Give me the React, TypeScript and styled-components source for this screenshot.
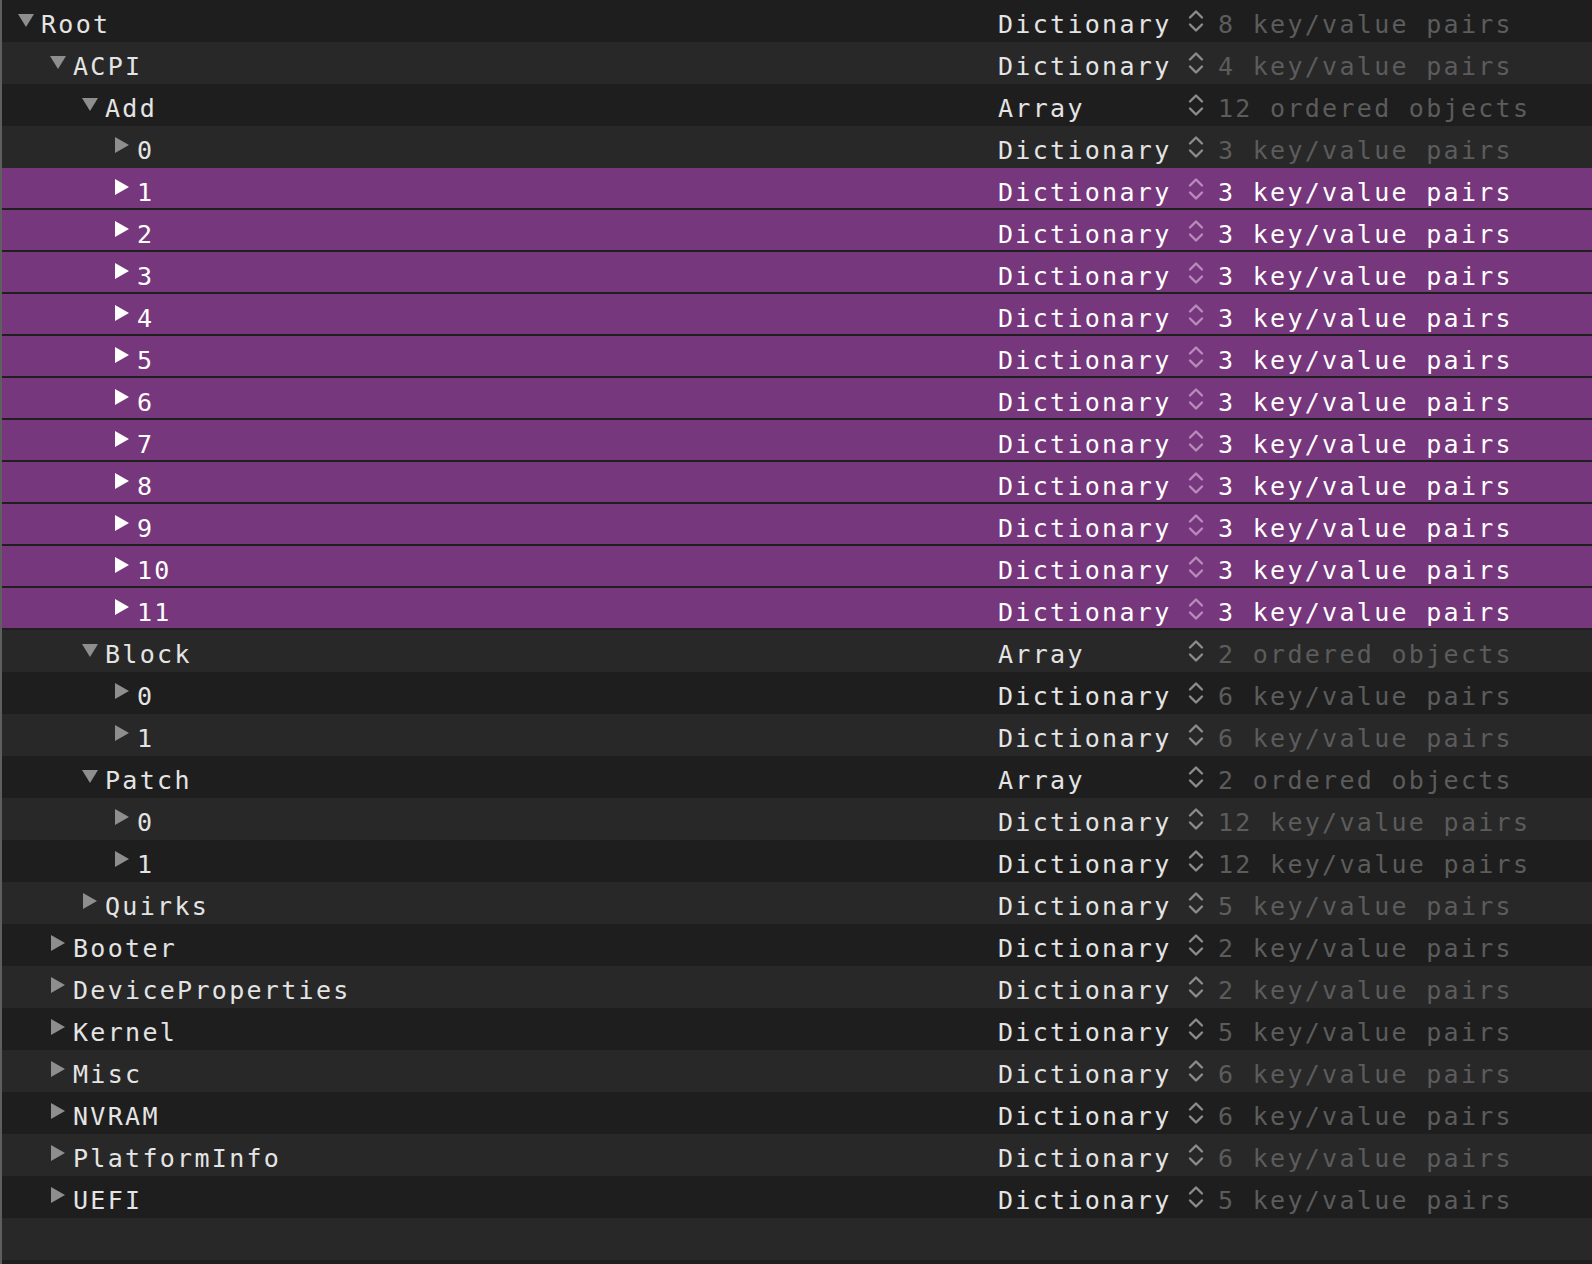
import React from 'react';
import styled, { createGlobalStyle } from 'styled-components';

interface Node {
  key: string;
  level: number;
  open: boolean;
  type: string;
  value: string;
  selected?: boolean;
}

const GlobalStyle = createGlobalStyle`
  html, body {
    margin: 0;
    padding: 0;
    background: #1e1e1e;
    overflow: hidden;
  }
  body {
    font-family: "DejaVu Sans Mono", "Liberation Mono", monospace;
  }
`;

const Outline = styled.div`
  width: 1592px;
  height: 1264px;
  box-sizing: border-box;
  border-left: 2px solid #5e5e5e;
  overflow: hidden;
  display: flex;
  flex-direction: column;
`;

const Row = styled.div<{ $alt: boolean; $selected?: boolean }>`
  flex: 0 0 42px;
  height: 42px;
  box-sizing: border-box;
  display: flex;
  align-items: flex-start;
  background: ${p => (p.$selected ? '#77377c' : p.$alt ? '#282828' : '#1e1e1e')};
  border-bottom: ${p => (p.$selected ? '2px solid #1f1f1f' : 'none')};
  color: ${p => (p.$selected ? '#ffffff' : '#e4e4e4')};
  font-size: 25px;
  letter-spacing: 2.3px;
  white-space: nowrap;
`;

const KeyCell = styled.div<{ $level: number }>`
  flex: 0 0 996px;
  display: flex;
  align-items: flex-start;
  padding-left: ${p => 16 + p.$level * 32}px;
  box-sizing: border-box;
`;

const Disclosure = styled.div`
  flex: 0 0 23px;
  height: 42px;
  display: flex;
  justify-content: flex-start;
`;

const TriangleDown = styled.span<{ $selected?: boolean }>`
  margin-top: 14px;
  width: 0;
  height: 0;
  border-left: 8px solid transparent;
  border-right: 8px solid transparent;
  border-top: 13px solid ${p => (p.$selected ? '#ffffff' : '#8e8e8e')};
`;

const TriangleRight = styled.span<{ $selected?: boolean }>`
  margin-top: 11px;
  margin-left: 1px;
  width: 0;
  height: 0;
  border-top: 8.5px solid transparent;
  border-bottom: 8.5px solid transparent;
  border-left: 14px solid ${p => (p.$selected ? '#ffffff' : '#8e8e8e')};
`;

const Text = styled.span`
  padding-top: 8px;
  line-height: 34px;
`;

const TypeCell = styled(Text)`
  flex: 0 0 190px;
`;

const StepperCell = styled.div<{ $selected?: boolean }>`
  flex: 0 0 30px;
  height: 42px;
  display: flex;
  align-items: flex-start;
  color: ${p => (p.$selected ? '#b98bbc' : '#8c8c8c')};

  svg {
    margin-top: 9px;
  }
`;

const ValueCell = styled(Text)<{ $selected?: boolean }>`
  color: ${p => (p.$selected ? '#ffffff' : '#5c5c5c')};
`;

const Stepper = () => (
  <svg width="16" height="24" viewBox="0 0 16 24" fill="none" stroke="currentColor" strokeWidth="2.4" strokeLinecap="round" strokeLinejoin="round">
    <path d="M2 8.5 L8 2.5 L14 8.5" />
    <path d="M2 15.5 L8 21.5 L14 15.5" />
  </svg>
);

const dict = (n: number) => `${n} key/value pairs`;
const arr = (n: number) => `${n} ordered objects`;

const nodes: Node[] = [
  { key: 'Root', level: 0, open: true, type: 'Dictionary', value: dict(8) },
  { key: 'ACPI', level: 1, open: true, type: 'Dictionary', value: dict(4) },
  { key: 'Add', level: 2, open: true, type: 'Array', value: arr(12) },
  { key: '0', level: 3, open: false, type: 'Dictionary', value: dict(3) },
  ...Array.from({ length: 11 }, (_, i) => ({
    key: String(i + 1),
    level: 3,
    open: false,
    type: 'Dictionary',
    value: dict(3),
    selected: true,
  })),
  { key: 'Block', level: 2, open: true, type: 'Array', value: arr(2) },
  { key: '0', level: 3, open: false, type: 'Dictionary', value: dict(6) },
  { key: '1', level: 3, open: false, type: 'Dictionary', value: dict(6) },
  { key: 'Patch', level: 2, open: true, type: 'Array', value: arr(2) },
  { key: '0', level: 3, open: false, type: 'Dictionary', value: dict(12) },
  { key: '1', level: 3, open: false, type: 'Dictionary', value: dict(12) },
  { key: 'Quirks', level: 2, open: false, type: 'Dictionary', value: dict(5) },
  { key: 'Booter', level: 1, open: false, type: 'Dictionary', value: dict(2) },
  { key: 'DeviceProperties', level: 1, open: false, type: 'Dictionary', value: dict(2) },
  { key: 'Kernel', level: 1, open: false, type: 'Dictionary', value: dict(5) },
  { key: 'Misc', level: 1, open: false, type: 'Dictionary', value: dict(6) },
  { key: 'NVRAM', level: 1, open: false, type: 'Dictionary', value: dict(6) },
  { key: 'PlatformInfo', level: 1, open: false, type: 'Dictionary', value: dict(6) },
  { key: 'UEFI', level: 1, open: false, type: 'Dictionary', value: dict(5) },
];

const App: React.FC = () => {
  return (
    <>
      <GlobalStyle />
      <Outline>
        {nodes.map((n, i) => (
          <Row key={i} $alt={i % 2 === 1} $selected={n.selected}>
            <KeyCell $level={n.level}>
              <Disclosure>
                {n.open ? <TriangleDown $selected={n.selected} /> : <TriangleRight $selected={n.selected} />}
              </Disclosure>
              <Text>{n.key}</Text>
            </KeyCell>
            <TypeCell>{n.type}</TypeCell>
            <StepperCell $selected={n.selected}>
              <Stepper />
            </StepperCell>
            <ValueCell $selected={n.selected}>{n.value}</ValueCell>
          </Row>
        ))}
        <Row $alt={true} />
        <Row $alt={false} />
      </Outline>
    </>
  );
};

export default App;
